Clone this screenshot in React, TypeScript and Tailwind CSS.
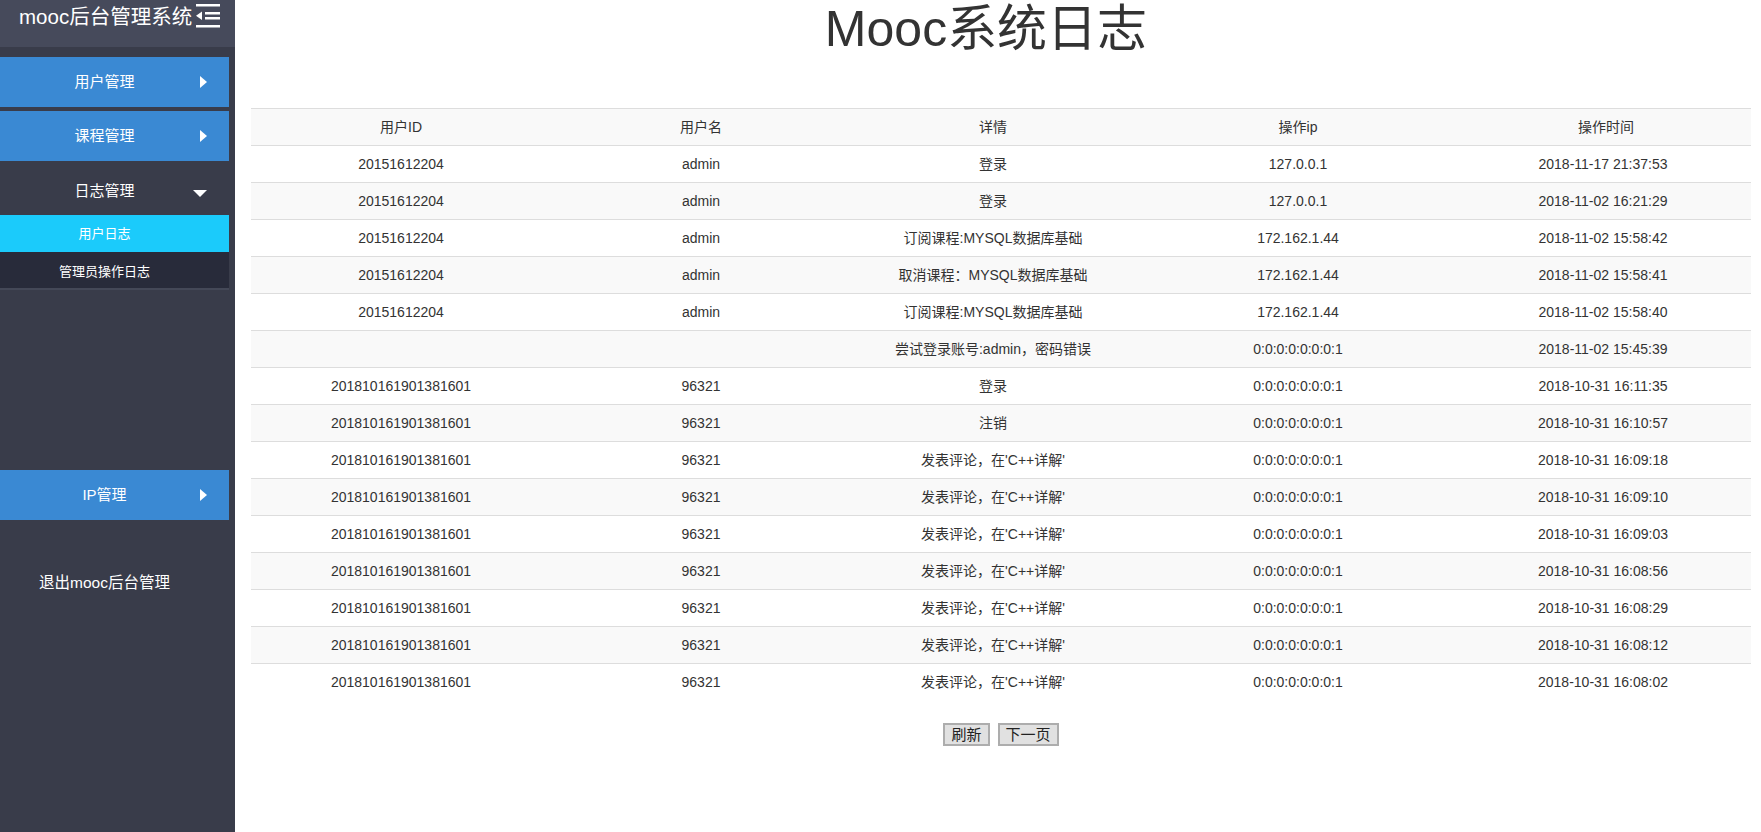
import React from 'react';

type LogRow = {
  userId: string;
  userName: string;
  detail: string;
  ip: string;
  time: string;
};

const comment = "发表评论，在'C++详解'";
const uid2 = '201810161901381601';
const lo = '0:0:0:0:0:0:0:1';

const rows: LogRow[] = [
  { userId: '20151612204', userName: 'admin', detail: '登录', ip: '127.0.0.1', time: '2018-11-17 21:37:53' },
  { userId: '20151612204', userName: 'admin', detail: '登录', ip: '127.0.0.1', time: '2018-11-02 16:21:29' },
  { userId: '20151612204', userName: 'admin', detail: '订阅课程:MYSQL数据库基础', ip: '172.162.1.44', time: '2018-11-02 15:58:42' },
  { userId: '20151612204', userName: 'admin', detail: '取消课程：MYSQL数据库基础', ip: '172.162.1.44', time: '2018-11-02 15:58:41' },
  { userId: '20151612204', userName: 'admin', detail: '订阅课程:MYSQL数据库基础', ip: '172.162.1.44', time: '2018-11-02 15:58:40' },
  { userId: '', userName: '', detail: '尝试登录账号:admin，密码错误', ip: lo, time: '2018-11-02 15:45:39' },
  { userId: uid2, userName: '96321', detail: '登录', ip: lo, time: '2018-10-31 16:11:35' },
  { userId: uid2, userName: '96321', detail: '注销', ip: lo, time: '2018-10-31 16:10:57' },
  { userId: uid2, userName: '96321', detail: comment, ip: lo, time: '2018-10-31 16:09:18' },
  { userId: uid2, userName: '96321', detail: comment, ip: lo, time: '2018-10-31 16:09:10' },
  { userId: uid2, userName: '96321', detail: comment, ip: lo, time: '2018-10-31 16:09:03' },
  { userId: uid2, userName: '96321', detail: comment, ip: lo, time: '2018-10-31 16:08:56' },
  { userId: uid2, userName: '96321', detail: comment, ip: lo, time: '2018-10-31 16:08:29' },
  { userId: uid2, userName: '96321', detail: comment, ip: lo, time: '2018-10-31 16:08:12' },
  { userId: uid2, userName: '96321', detail: comment, ip: lo, time: '2018-10-31 16:08:02' },
];

const fontStack = { fontFamily: '"Liberation Sans", "Noto Sans CJK SC", sans-serif' };

// small white triangles used on the menu items
const ArrowRight = () => (
  <svg width="8" height="12" viewBox="0 0 8 12" className="absolute left-[200px] top-1/2 -translate-y-1/2">
    <path d="M0 0 L7 6 L0 12 Z" fill="#fff" />
  </svg>
);

const ArrowDown = () => (
  <svg width="14" height="7" viewBox="0 0 14 7" className="absolute left-[193px] top-[29px]">
    <path d="M0 0 L14 0 L7 7 Z" fill="#fff" />
  </svg>
);

const OutdentIcon = () => (
  <svg width="24" height="24" viewBox="0 0 24 24" className="mt-[4px]">
    <rect x="0" y="0" width="24" height="2.5" fill="#fff" />
    <rect x="9" y="8" width="15" height="2.5" fill="#fff" />
    <rect x="9" y="13" width="15" height="2.5" fill="#fff" />
    <rect x="0" y="21" width="24" height="2.5" fill="#fff" />
    <path d="M6 7.5 L0 11.75 L6 16 Z" fill="#fff" />
  </svg>
);

const MenuItem: React.FC<{ label: string; className?: string }> = ({ label, className }) => (
  <div className={`relative w-[229px] h-[50px] bg-[#3a89d3] flex items-center justify-center pr-[20px] text-[15px] text-white ${className ?? ''}`}>
    {label}
    <ArrowRight />
  </div>
);

const Sidebar: React.FC = () => (
  <aside className="w-[235px] shrink-0 h-full bg-[#393c4a] text-white" style={fontStack}>
    <div className="h-[47px] bg-[#464a5b] flex items-start pl-[19px] gap-[4px]">
      <span className="text-[20.5px] leading-[24px] mt-[5px]">mooc后台管理系统</span>
      <OutdentIcon />
    </div>
    <MenuItem label="用户管理" className="mt-[10px]" />
    <MenuItem label="课程管理" className="mt-[4px]" />
    <div className="relative w-[229px] h-[54px] flex items-center justify-center pr-[20px] pt-[6px] text-[15px]">
      日志管理
      <ArrowDown />
    </div>
    <div className="w-[229px] h-[37px] bg-[#1bcbfb] flex items-center justify-center pr-[20px] text-[13px]">用户日志</div>
    <div className="w-[229px] h-[38px] bg-[#282b3a] border-b-2 border-[#444857] flex items-center justify-center pr-[20px] pt-[3px] text-[13px]">
      管理员操作日志
    </div>
    <MenuItem label="IP管理" className="mt-[180px]" />
    <div className="mt-[53px] w-[229px] text-center pr-[20px] text-[15.5px] leading-[20px]">退出mooc后台管理</div>
  </aside>
);

const App: React.FC = () => {
  return (
    <div className="flex h-screen w-full bg-white overflow-hidden" style={fontStack}>
      <Sidebar />
      <main className="flex-1 min-w-0 pl-[16px] pr-[10px] text-[#333]">
        <h1 className="text-center text-[50px] leading-[58px] font-normal h-[108px] pr-[30px] text-[#333]">
          Mooc系统日志
        </h1>
        <table className="w-full border-collapse text-[14px] table-fixed">
          <colgroup>
            <col className="w-[300px]" />
            <col className="w-[300px]" />
            <col className="w-[284px]" />
            <col className="w-[326px]" />
            <col />
          </colgroup>
          <tbody>
            <tr className="bg-[#f9f9f9]">
              {['用户ID', '用户名', '详情', '操作ip', '操作时间'].map((h) => (
                <th key={h} className="h-[37px] border-t border-[#ddd] font-normal text-center align-middle p-0">
                  {h}
                </th>
              ))}
            </tr>
            {rows.map((r, i) => (
              <tr key={i} className={i % 2 === 1 ? 'bg-[#f9f9f9]' : 'bg-white'}>
                <td className="h-[37px] border-t border-[#ddd] text-center align-middle p-0">{r.userId}</td>
                <td className="h-[37px] border-t border-[#ddd] text-center align-middle p-0">{r.userName}</td>
                <td className="h-[37px] border-t border-[#ddd] text-center align-middle p-0 whitespace-nowrap">{r.detail}</td>
                <td className="h-[37px] border-t border-[#ddd] text-center align-middle p-0">{r.ip}</td>
                <td className="h-[37px] border-t border-[#ddd] text-center align-middle p-0 pr-[6px]">{r.time}</td>
              </tr>
            ))}
          </tbody>
        </table>
        <div className="flex justify-center gap-[8px] mt-[22px]">
          <button className="h-[23px] px-[6px] bg-[#e1e1e1] border-2 border-[#adadad] text-[15px] leading-[17px] text-[#222]">刷新</button>
          <button className="h-[23px] px-[6px] bg-[#e1e1e1] border-2 border-[#adadad] text-[15px] leading-[17px] text-[#222]">下一页</button>
        </div>
      </main>
    </div>
  );
};

export default App;
